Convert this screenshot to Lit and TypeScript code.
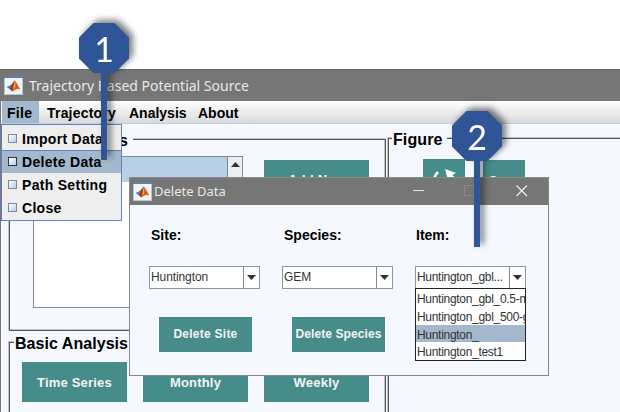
import { LitElement, html, css } from "lit";
import { customElement, property } from "lit/decorators.js";

@customElement("matlab-icon")
class MatlabIcon extends LitElement {
  static styles = css`
    :host { display: block; flex: none; width: 19px; height: 19px; }
    svg { display: block; }
  `;
  render() {
    return html`<svg width="19" height="19" viewBox="0 0 19 19">
      <rect x=".5" y=".5" width="18" height="18" fill="#f1f3f5" stroke="#b9c4ce"/>
      <rect x="0" y="0" width="19" height="2" fill="#5583ad"/>
      <path d="M2.500 11 6 9.500 8 10.800 5.500 13Z" fill="#3f7fbd"/>
      <path d="M6 9.500 C8 9 9 6 10.600 4.500 L8.400 11.500Z" fill="#35618e"/>
      <path d="M5.500 13 C8 11 8.500 6.500 10.600 4.500 L11 10 8.500 15.500Z" fill="#a2341c"/>
      <path d="M10.600 4.500 C12.500 5.500 14 10.500 16.500 13.500 C13.500 12 12 12.500 8.500 15.500 C9.500 11 9.500 7 10.600 4.500Z" fill="#d9531c"/>
      <path d="M10.600 4.500 C11.300 5.500 11.500 9 11.200 11.500 L9 14Z" fill="#f7a932"/>
    </svg>`;
  }
}

@customElement("step-marker")
class StepMarker extends LitElement {
  @property() label = "";
  @property({ type: Number }) stem = 100;
  static styles = css`
    :host { display: block; width: 50px; filter: drop-shadow(4px -3px 3px rgba(0, 0, 0, 0.5)); }
    .head {
      width: 50px; height: 50px; background: #2f5597; color: #fff;
      clip-path: polygon(29% 0, 71% 0, 100% 29%, 100% 71%, 71% 100%, 29% 100%, 0 71%, 0 29%);
      font: 34px/51px Lato, sans-serif; text-align: center;
    }
    .stem { width: 6px; margin-left: 22px; background: #2f5597; }
  `;
  render() {
    return html`<div class="head">${this.label}</div>
      <div class="stem" style="height:${this.stem}px"></div>`;
  }
}

@customElement("combo-box")
class ComboBox extends LitElement {
  @property() value = "";
  static styles = css`
    :host {
      display: flex; box-sizing: border-box; width: 111px; height: 23px;
      border: 1px solid #8798ad; background: #fff;
      font: 12px/21px "Liberation Sans", sans-serif; color: #333; letter-spacing: -.1px;
    }
    .value { width: 94px; box-sizing: border-box; padding-left: 1px; border-right: 1px solid #7a8a99; white-space: nowrap; overflow: hidden; }
    .arrow { flex: 1; display: flex; align-items: center; justify-content: center; }
  `;
  render() {
    return html`<div class="value">${this.value}</div>
      <div class="arrow"><svg width="9" height="5"><path d="M0 0H9L4.500 5Z" fill="#333"/></svg></div>`;
  }
}

@customElement("app-root")
class AppRoot extends LitElement {
  static styles = css`
    :host {
      display: block; position: relative; width: 620px; height: 412px; overflow: hidden;
      background: #fff; font-family: "Liberation Sans", Arial, sans-serif; color: #000;
    }
    .main { position: absolute; left: 0; top: 69px; width: 630px; height: 350px; background: #f5f8fe; border-left: 1px solid #767676; box-sizing: border-box; display: flex; flex-direction: column; }
    .titlebar { height: 32px; flex: none; display: flex; align-items: center; background: #767676; color: #e8e8e8; font: 14px "Noto Sans", sans-serif; box-sizing: border-box; border-top: 1px solid #666; }
    .main .titlebar { padding-left: 3px; gap: 6px; }
    .menubar { height: 23px; flex: none; display: flex; margin-left: 1px; background: linear-gradient(#fff, #dadada); border-bottom: 1px solid #b8cfe5; box-sizing: border-box; font: bold 14px/25px "Liberation Sans", sans-serif; }
    .menubar span { white-space: nowrap; }
    .file { width: 37px; box-sizing: border-box; padding-left: 5px; background: #a3b8cc; margin-right: 8px; letter-spacing: .3px; }
    .traj { width: 82px; letter-spacing: .2px; }
    .anal { width: 69px; }
    .content { flex: 1; display: flex; gap: 2px; padding: 9px 0 0 8px; }
    .left { width: 377px; display: flex; flex-direction: column; }
    .group { position: relative; box-sizing: border-box; border: 1px solid #555; box-shadow: -1px -1px 0 #c4c4c4, inset -1px -1px 0 #c4c4c4; }
    .sources { height: 192px; margin-top: 6px; display: flex; padding: 16px 0 0 23px; gap: 21px; }
    .basic { height: 110px; margin-top: 11px; padding: 19px 0 0 12px; display: flex; gap: 16px; }
    .figure { flex: 1; margin-top: 5px; height: 310px; display: flex; gap: 18px; padding: 20px 0 0 34px; }
    .legend { position: absolute; top: -8px; background: #f5f8fe; font: bold 16px/18px "Liberation Sans", sans-serif; white-space: nowrap; padding: 0 4px 0 1px; }
    .lg-src { left: 4px; width: 113px; text-align: right; padding-right: 5px; }
    .lg-fig { left: 3px; letter-spacing: .1px; }
    .lg-bas { left: 4px; letter-spacing: .05px; }
    .list { width: 210px; height: 152px; box-sizing: border-box; border: 1px solid #7a8a99; background: #fff; display: flex; }
    .row { flex: 1; height: 25px; background: #b8cfe5; }
    .scroll { width: 15px; background: #eee; border-left: 1px solid #7a8a99; display: flex; justify-content: center; padding-top: 5px; box-sizing: border-box; }
    .btn { flex: none; width: 105px; height: 40px; background: #468c8a; color: #f4f4f0; font: bold 13px/41px "Liberation Sans", sans-serif; text-align: center; letter-spacing: .2px; white-space: nowrap; }
    .sources .btn { margin-top: 4px; line-height: 40px; }
    .small { width: 42px; letter-spacing: 0; }
    .save { margin-top: 1px; }
    .menu { position: absolute; left: 1px; top: 124px; width: 121px; height: 97px; box-sizing: border-box; border: 1px solid #6382bf; background: #eee; padding-top: 3px; font: bold 14px/23px "Liberation Sans", sans-serif; display: flex; flex-direction: column; }
    .item { flex: none; height: 23px; display: flex; gap: 5px; padding-left: 6px; white-space: nowrap; letter-spacing: .3px; }
    .item.on { height: 22px; margin-bottom: 1px; background: #a3b8cc; box-shadow: 0 -1px 0 #6382bf; }
    .box { width: 9px; height: 9px; margin-top: 6px; box-sizing: border-box; border: 1px solid #7a8a99; background: linear-gradient(135deg, #fff, #b8cfe5); }
    .on .box { border-color: #333; }
    .dialog { position: absolute; left: 129px; top: 177px; width: 420px; height: 199px; box-sizing: border-box; border: 1px solid #898989; background: #f5f8fe; display: flex; flex-direction: column; }
    .dialog .titlebar { height: 27px; padding-left: 3px; gap: 3px; border: 0; font-size: 13px; }
    .dialog .title { margin-top: -1px; }
    .dialog matlab-icon { width: 18px; }
    .title { flex: 1; white-space: nowrap; }
    .controls { display: block; }
    .cols { display: grid; grid-template-columns: 133px 133px 111px; padding: 20px 0 0 19px; }
    .col { display: flex; flex-direction: column; align-items: flex-start; }
    .lab { font: bold 14px/20px "Liberation Sans", sans-serif; margin: 0 0 21px 2px; }
    .lab.third { margin-left: 1px; }
    .dialog .btn { width: 93px; height: 35px; margin: 28px 0 0 10px; font-size: 12px; line-height: 35px; letter-spacing: .1px; }
    .dialog .btn.site { letter-spacing: .25px; }
    .options { width: 111px; height: 73px; margin-top: -1px; box-sizing: border-box; border: 1px solid #222; background: #fff; overflow: hidden; font: 12px/20px "Liberation Sans", sans-serif; color: #333; white-space: nowrap; letter-spacing: -.3px; }
    .opt { height: 17.750px; padding-left: 1px; }
    .opt.on { background: #a3b8cc; }
    .item-combo { letter-spacing: -.3px; }
    .m1, .m2 { position: absolute; }
    .m1 { left: 79px; top: 23px; }
    .m2 { left: 452px; top: 111px; }
  `;
  render() {
    return html`
      <div class="main">
        <div class="titlebar"><matlab-icon></matlab-icon><span class="title">Trajectory Based Potential Source</span></div>
        <div class="menubar"><span class="file">File</span><span class="traj">Trajectory</span><span class="anal">Analysis</span><span>About</span></div>
        <div class="content">
          <div class="left">
            <div class="group sources"><span class="legend lg-src">s</span>
              <div class="list"><div class="row"></div><div class="scroll"><svg width="9" height="5"><path d="M0 5H9L4.500 0Z" fill="#333"/></svg></div></div>
              <div class="btn">Add New</div>
            </div>
            <div class="group basic"><span class="legend lg-bas">Basic Analysis</span>
              <div class="btn">Time Series</div><div class="btn">Monthly</div><div class="btn">Weekly</div>
            </div>
          </div>
          <div class="group figure"><span class="legend lg-fig">Figure</span>
            <div class="btn small"><svg width="42" height="40"><path d="M15 13Q9 19 12 26" fill="none" stroke="#fff" stroke-width="2.500"/><path d="M22 10 33 14 29.500 16 33 20 31 22 27 18 25 21Z" fill="#fff"/></svg></div>
            <div class="btn small save">Save</div>
          </div>
        </div>
      </div>
      <div class="menu">
        ${["Import Data", "Delete Data", "Path Setting", "Close"].map((t, i) => html`<div class="item ${i === 1 ? "on" : ""}"><i class="box"></i><span>${t}</span></div>`)}
      </div>
      <div class="dialog">
        <div class="titlebar"><matlab-icon></matlab-icon><span class="title">Delete Data</span>
          <svg class="controls" width="136" height="27"><path d="M1 12.500H12" stroke="#e4e4e4"/><rect x="52.500" y="7.500" width="10" height="10" fill="none" stroke="#8a8a8a"/><path d="M104.500 7.500 115 18M115 7.500 104.500 18" stroke="#eee" stroke-width="1.200"/></svg>
        </div>
        <div class="cols">
          <div class="col"><div class="lab">Site:</div><combo-box value="Huntington"></combo-box><div class="btn site">Delete Site</div></div>
          <div class="col"><div class="lab">Species:</div><combo-box value="GEM"></combo-box><div class="btn">Delete Species</div></div>
          <div class="col"><div class="lab third">Item:</div><combo-box class="item-combo" value="Huntington_gbl..."></combo-box>
            <div class="options">${["Huntington_gbl_0.5-m", "Huntington_gbl_500-g", "Huntington_", "Huntington_test1"].map((t, i) => html`<div class="opt ${i === 2 ? "on" : ""}">${t}</div>`)}</div>
          </div>
        </div>
      </div>
      <step-marker class="m1" label="1" .stem=${87}></step-marker>
      <step-marker class="m2" label="2" .stem=${86}></step-marker>
    `;
  }
}
